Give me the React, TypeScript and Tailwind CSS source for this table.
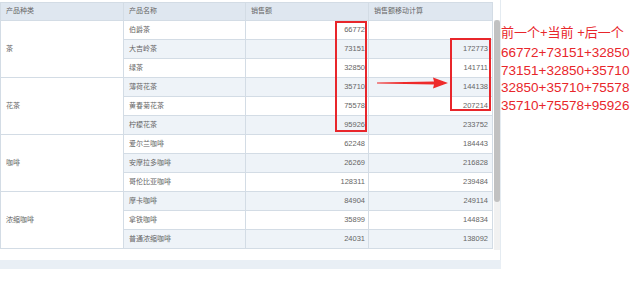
import React from 'react';

type Row = { cat?: string; span?: number; name: string; sales: number; moving?: number };

const rows: Row[] = [
  { cat: '茶', span: 3, name: '伯爵茶', sales: 66772 },
  { name: '大吉岭茶', sales: 73151, moving: 172773 },
  { name: '绿茶', sales: 32850, moving: 141711 },
  { cat: '花茶', span: 3, name: '薄荷花茶', sales: 35710, moving: 144138 },
  { name: '黄春菊花茶', sales: 75578, moving: 207214 },
  { name: '柠檬花茶', sales: 95926, moving: 233752 },
  { cat: '咖啡', span: 3, name: '爱尔兰咖啡', sales: 62248, moving: 184443 },
  { name: '安摩拉多咖啡', sales: 26269, moving: 216828 },
  { name: '哥伦比亚咖啡', sales: 128311, moving: 239484 },
  { cat: '浓缩咖啡', span: 3, name: '摩卡咖啡', sales: 84904, moving: 249114 },
  { name: '拿铁咖啡', sales: 35899, moving: 144834 },
  { name: '普通浓缩咖啡', sales: 24031, moving: 138092 },
];

const notes = [
  '66772+73151+32850',
  '73151+32850+35710',
  '32850+35710+75578',
  '35710+75578+95926',
];

const font = { fontFamily: '"Liberation Sans", "Noto Sans CJK SC", sans-serif' };

export default function App() {
  return (
    <div className="flex w-[640px] h-[308px] bg-white text-[#666]" style={font}>
      {/* Report panel */}
      <div className="relative w-[501px] h-[269px] bg-[#e9eff5] pb-[9px] shrink-0">
        <div className="flex h-full bg-white pt-[2px] border-r border-[#e4ebf1]">
          <table className="w-[492px] border-collapse table-fixed text-[7px] self-start">
            <colgroup>
              <col className="w-[123px]" />
              <col className="w-[122px]" />
              <col className="w-[123px]" />
              <col className="w-[124px]" />
            </colgroup>
            <thead>
              <tr className="h-[18px] bg-[#dfe7f0]">
                <th className="border border-[#d3dce5] text-left font-normal pl-[5px]">产品种类</th>
                <th className="border border-[#d3dce5] text-left font-normal pl-[5px]">产品名称</th>
                <th className="border border-[#d3dce5] text-left font-normal pl-[5px]">销售额</th>
                <th className="border border-[#d3dce5] text-left font-normal pl-[5px]">销售额移动计算</th>
              </tr>
            </thead>
            <tbody>
              {rows.map((r, i) => {
                const shade = i % 2 === 1 ? 'bg-[#eef3f8]' : 'bg-white';
                return (
                  <tr key={r.name} className="h-[19px]">
                    {r.cat && (
                      <td rowSpan={r.span} className="border border-[#d3dce5] bg-white pl-[5px]">
                        {r.cat}
                      </td>
                    )}
                    <td className={`border border-[#d3dce5] pl-[5px] ${shade}`}>{r.name}</td>
                    <td className={`border border-[#d3dce5] text-right pr-[3px] text-[7.5px] ${shade}`}>{r.sales}</td>
                    <td className={`border border-[#d3dce5] text-right pr-[4px] text-[7.5px] ${shade}`}>
                      {r.moving ?? ''}
                    </td>
                  </tr>
                );
              })}
            </tbody>
          </table>

          {/* Scrollbar */}
          <div className="w-[8px] pt-[18px] flex flex-col">
            <div className="h-[230px] bg-[#f1f1f1] w-[6px] ml-[1px]">
              <div className="h-[182px] bg-[#c1c1c1] rounded-[3px]" />
            </div>
          </div>
        </div>

        {/* Annotations */}
        <div className="absolute left-[335px] top-[21px] w-[32px] h-[111px] border-2 border-[#e8262b]" />
        <div className="absolute left-[450px] top-[38px] w-[41px] h-[73px] border-2 border-[#e8262b]" />
        <svg className="absolute left-[376px] top-[77px]" width="73" height="12" viewBox="0 0 73 12">
          <polygon points="1,5.6 58,4.6 57,0.5 72,6 57,11.5 58,7.4 1,6.4" fill="#ee2a2a" />
        </svg>
      </div>

      {/* Side note */}
      <div className="pt-[24px] text-[#e8262b] text-[13.5px] leading-[17.5px] whitespace-nowrap">
        <div className="text-[13px] mb-[2.5px]">前一个+当前 +后一个</div>
        {notes.map((n) => (
          <div key={n}>{n}</div>
        ))}
      </div>
    </div>
  );
}
